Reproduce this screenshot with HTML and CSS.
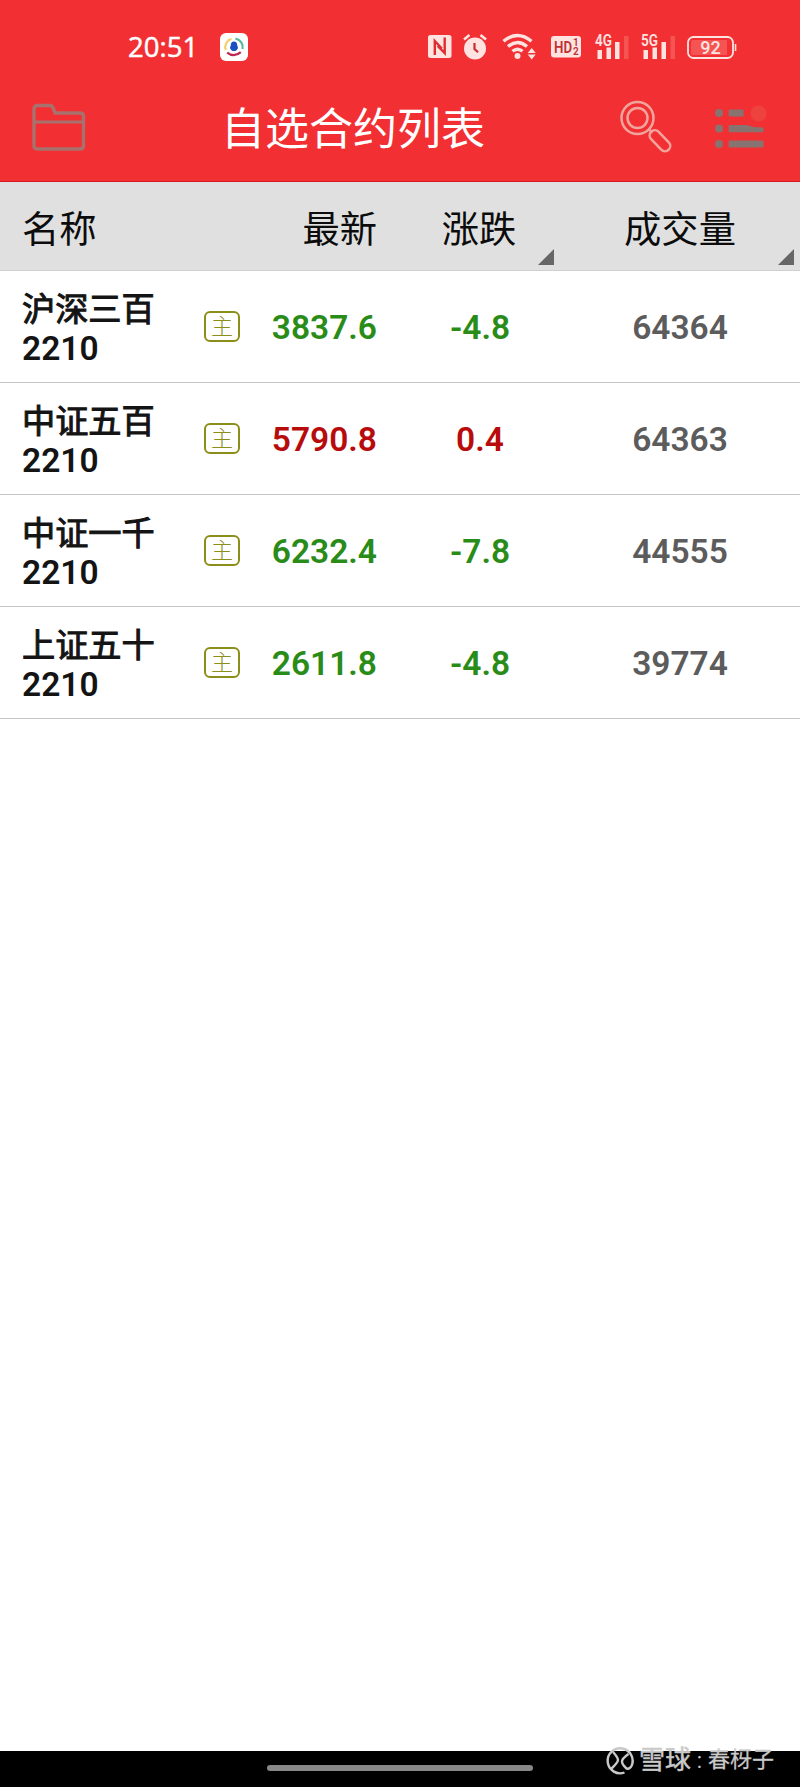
FILE: index.html
```html
<!DOCTYPE html>
<html lang="zh-CN">
<head>
  <meta charset="utf-8">
  <title>自选合约列表</title>
  <link rel="stylesheet" href="styles.css">
</head>
<body>
  <div class="screen">
    <header class="header">
      <div class="status-bar">
        <span class="time">20:51</span>
        <svg class="app-icon" width="28" height="28" viewBox="0 0 28 28">
          <rect width="28" height="28" rx="6" fill="#fff"/>
          <g fill="none" stroke-width="2.2">
            <path d="M5.8 17A8.6 8.6 0 0 1 11.5 5.8" stroke="#f2cf6b"/>
            <path d="M15.5 5.6A8.6 8.6 0 0 1 22.5 16" stroke="#55b99a"/>
            <path d="M7.2 19.6Q14 25 20.8 19.2" stroke="#c0264f"/>
          </g>
          <path d="M14 8.500c2.200 0 3.200 1.600 3.200 4 .9 1.500 1 3 .2 3.600-.5 1.400-1.800 2-3.400 2s-2.900-.6-3.400-2c-.8-.6-.7-2.100.2-3.600 0-2.400 1-4 3.200-4z" fill="#1b4fc4"/>
        </svg>
        <div class="status-icons">
          <svg width="24" height="24" viewBox="0 0 24 24">
            <rect width="23.500" height="23" rx="2.500" fill="#ffe3e0"/>
            <path d="M6.800 20V6l7 7.500M16.700 2.500v15.500l-7-7" fill="none" stroke="#dc2e30" stroke-width="2.400"/>
          </svg>
          <svg class="alarm" width="24" height="26" viewBox="0 0 24 26">
            <circle cx="12" cy="14.500" r="11" fill="#ffe3e0"/>
            <path d="M1 5.500L6.500 1M17.500 1L23 5.500" stroke="#ffe3e0" stroke-width="2.600"/>
            <path d="M11.500 9v6l3.500 3.200" fill="none" stroke="#c92d30" stroke-width="2.200"/>
          </svg>
          <svg class="wifi" width="34" height="26" viewBox="0 0 34 26">
            <g fill="none" stroke="#ffe3e0" stroke-width="3.400">
              <path d="M1.500 7.200Q15.500-4.200 29.500 7.200"/>
              <path d="M6 12.500Q15.500 4.500 25 12.500"/>
              <path d="M10.500 17.300Q15.500 13 20.500 17.300"/>
            </g>
            <circle cx="15.500" cy="22" r="3" fill="#ffe3e0"/>
            <path d="M29.700 14l4 5h-8zM25.700 20.500h8l-4 5z" fill="#ffe3e0"/>
          </svg>
          <svg class="hd" width="30" height="22" viewBox="0 0 30 22">
            <rect width="30" height="21.500" rx="3" fill="#ffe3e0"/>
            <g class="svg-label" fill="#bd3034">
              <text x="3" y="16.500" font-size="16" textLength="18" lengthAdjust="spacingAndGlyphs">HD</text>
              <text x="22" y="10.300" font-size="10">1</text>
              <text x="22" y="19" font-size="10">2</text>
            </g>
          </svg>
          <svg class="signal" width="35" height="26" viewBox="0 0 35 26">
            <text class="svg-label" x="0" y="11.500" font-size="16" fill="#ffe3e0" textLength="17" lengthAdjust="spacingAndGlyphs">4G</text>
            <path d="M2.500 16h4.500v9H2.500zM11.500 13.500H16V25h-4.500zM20 8h4.500v17H20z" fill="#ffe3e0"/>
            <path d="M29 2h4.500v23H29z" fill="#f65353"/>
          </svg>
          <svg class="signal signal-5g" width="35" height="26" viewBox="0 0 35 26">
            <text class="svg-label" x="0" y="11.500" font-size="16" fill="#ffe3e0" textLength="17" lengthAdjust="spacingAndGlyphs">5G</text>
            <path d="M2.500 16h4.500v9H2.500zM11.500 13.500H16V25h-4.500zM20.500 8H25v17h-4.500z" fill="#ffe3e0"/>
            <path d="M29.500 2H34v23h-4.500z" fill="#f65353"/>
          </svg>
          <svg class="battery" width="50" height="23" viewBox="0 0 50 23">
            <rect x="1" y="1" width="45" height="21" rx="5.500" fill="none" stroke="#ffe3e0" stroke-width="1.800"/>
            <path d="M6 4h34v15H6q-2 0-2-2V6q0-2 2-2z" fill="#f65353"/>
            <path d="M48.500 8v7" stroke="#ffe3e0" stroke-width="1.600"/>
            <text class="battery-label" x="23.500" y="17.800" font-size="18" fill="#ffe3e0" text-anchor="middle">92</text>
          </svg>
        </div>
      </div>
      <div class="title-bar">
        <svg class="folder" width="54" height="48" viewBox="0 0 54 48">
          <path d="M2 43V6q0-3.500 3.500-3.500h12.500q2 0 2.800 2l2.400 5.500H48q3.500 0 3.500 3.500V43q0 3-3.500 3H5.500Q2 46 2 43z" fill="none" stroke="#a8716e" stroke-width="3.400"/>
          <path d="M2 19h49.500" stroke="#a8716e" stroke-width="3"/>
        </svg>
        <h1>自选合约列表</h1>
        <svg class="search" width="52" height="53" viewBox="0 0 52 53">
          <g fill="none" stroke="#f0a49c" stroke-width="2.500">
            <circle cx="17.500" cy="18" r="16"/>
            <circle cx="17.500" cy="18" r="10"/>
            <path d="M29 29.500l3.500 3"/>
            <rect x="27.500" y="35.500" width="25" height="10.500" rx="5.250" transform="rotate(46 40 40.700)"/>
          </g>
        </svg>
        <svg class="menu" width="54" height="46" viewBox="0 0 54 46">
          <g fill="#87736f">
            <circle cx="5" cy="9" r="4"/>
            <circle cx="5" cy="24.500" r="4"/>
            <circle cx="5" cy="40" r="4"/>
            <path d="M16 5.500h13.500v7H16q-1.500 0-1.500-1.500V7q0-1.500 1.500-1.500z"/>
            <path d="M16 21h17q5 2.500 16.500 2.500V27q0 1.200-1.500 1.200H16q-1.500 0-1.500-1.500v-4.200Q14.500 21 16 21z"/>
            <rect x="14.500" y="36.500" width="35" height="7" rx="1.500"/>
          </g>
          <circle cx="44.500" cy="9.500" r="8" fill="#ee423e"/>
        </svg>
      </div>
    </header>

    <div class="grid columns">
      <div class="col-name">名称</div>
      <div class="col-price">最新</div>
      <div class="col-change sortable">涨跌</div>
      <div class="col-volume sortable">成交量</div>
    </div>

    <main class="list">
      <div class="grid row">
        <div class="col-name">
          <div class="name"><span class="index">沪深三百</span><br>2210</div>
          <span class="badge">主</span>
        </div>
        <div class="col-price down">3837.6</div>
        <div class="col-change down">-4.8</div>
        <div class="col-volume">64364</div>
      </div>
      <div class="grid row">
        <div class="col-name">
          <div class="name"><span class="index">中证五百</span><br>2210</div>
          <span class="badge">主</span>
        </div>
        <div class="col-price up">5790.8</div>
        <div class="col-change up">0.4</div>
        <div class="col-volume">64363</div>
      </div>
      <div class="grid row">
        <div class="col-name">
          <div class="name"><span class="index">中证一千</span><br>2210</div>
          <span class="badge">主</span>
        </div>
        <div class="col-price down">6232.4</div>
        <div class="col-change down">-7.8</div>
        <div class="col-volume">44555</div>
      </div>
      <div class="grid row">
        <div class="col-name">
          <div class="name"><span class="index">上证五十</span><br>2210</div>
          <span class="badge">主</span>
        </div>
        <div class="col-price down">2611.8</div>
        <div class="col-change down">-4.8</div>
        <div class="col-volume">39774</div>
      </div>
    </main>

    <footer class="nav-bar">
      <div class="home-handle"></div>
      <div class="watermark">
        <svg width="28" height="28" viewBox="0 0 28 28">
          <g fill="none" stroke="#c9c9c9" stroke-width="2.400">
            <path d="M18.500 25.500A12.500 12.500 0 1 1 25.500 19Q23.500 22.500 20.500 21.500Q16 17.500 16 14.500T22.500 7"/>
            <path d="M7 5q5 5.500 5 8T5 22"/>
          </g>
        </svg>
        <span class="brand">雪球</span>
        <span class="colon">:</span>
        <span class="author">春枒子</span>
      </div>
    </footer>
  </div>
</body>
</html>
```

FILE: styles.css
```css
* {
  box-sizing: border-box;
}

body {
  margin: 0;
  background-color: #fff;
  font-family: Roboto, "Noto Sans CJK SC", sans-serif;
}

svg {
  flex-shrink: 0;
  overflow: visible;
}

.screen {
  display: flex;
  flex-direction: column;
  width: 800px;
  height: 1787px;
}

/* Header */
.header {
  height: 182px;
  background-color: #f23033;
  border-bottom: 1px solid #d3191d;
}

.status-bar {
  display: flex;
  align-items: center;
  height: 80px;
  padding: 14px 63px 0 128px;
}

.time {
  width: 92px;
  color: #fff;
  font-family: "Open Sans", sans-serif;
  font-size: 27.500px;
  font-weight: 500;
  line-height: 30px;
  -webkit-text-stroke: 0.5px #fff;
}

.status-icons {
  display: flex;
  align-items: center;
  margin-left: auto;
}

.alarm {
  margin-left: 11px;
}

.wifi {
  margin-left: 15px;
}

.hd {
  margin-left: 15px;
}

.signal {
  margin-left: 14px;
}

.signal-5g {
  margin-left: 11px;
}

.battery {
  margin-left: 11px;
}

.svg-label {
  font-family: Roboto, sans-serif;
  font-weight: 600;
}

.battery-label {
  font-family: Roboto, sans-serif;
  font-weight: 500;
}

.title-bar {
  display: flex;
  align-items: center;
  height: 93px;
  padding: 0 32px 0 32px;
}

h1 {
  margin: 6px 0 0 135px;
  color: #fff;
  font-size: 44px;
  font-weight: 400;
  line-height: 60px;
}

.search {
  margin-left: auto;
}

.menu {
  margin-left: 42px;
}

/* Table */
.grid {
  display: grid;
  grid-template-columns: 240px 160px 160px 240px;
}

.col-name {
  display: flex;
  align-items: center;
  justify-content: space-between;
  padding-left: 22px;
}

.col-price {
  padding-right: 23px;
  text-align: right;
}

.col-change,
.col-volume {
  text-align: center;
}

.columns {
  height: 89px;
  border-bottom: 1px solid #d0d0d0;
  background-color: #e0e0e0;
  color: #0c0c0c;
  font-size: 37.300px;
  line-height: 80px;
}

.columns > div {
  padding-top: 8px;
}

.columns .col-change {
  padding-right: 2px;
}

.sortable {
  position: relative;
}

.sortable::after {
  content: "";
  position: absolute;
  right: 6px;
  bottom: 5px;
  width: 16px;
  height: 16px;
  background-color: #666;
  clip-path: polygon(100% 0, 100% 100%, 0 100%);
}

.row {
  align-items: center;
  height: 112px;
  border-bottom: 1px solid #c6c6c6;
  color: #5c5c5c;
  font-size: 33.500px;
  font-weight: 600;
}

.row > div {
  padding-top: 2px;
}

.name {
  padding-top: 2px;
  color: #141414;
  line-height: 39px;
}

.index {
  font-size: 33.200px;
  font-weight: 400;
  -webkit-text-stroke: 1px #141414;
}

.badge {
  width: 36px;
  height: 31px;
  margin-bottom: 2px;
  border: 2px solid #8c8e1a;
  border-radius: 6px;
  color: #8c8e1a;
  font-size: 22px;
  font-weight: 300;
  line-height: 27px;
  text-align: center;
}

.down {
  color: #2a8c18;
}

.up {
  color: #b80c0c;
}

/* Bottom navigation */
.nav-bar {
  position: relative;
  height: 36px;
  margin-top: auto;
  padding-top: 14px;
  background-color: #000;
}

.home-handle {
  width: 266px;
  height: 6px;
  margin: 0 auto;
  border-radius: 3px;
  background-color: #888;
}

.watermark {
  position: absolute;
  top: -4px;
  left: 606px;
  display: flex;
  align-items: center;
  height: 28px;
  color: #c9c9c9;
  line-height: 24px;
  white-space: nowrap;
}

.brand {
  margin: -3px 0 0 5px;
  font-size: 26px;
  font-weight: 400;
  -webkit-text-stroke: 0.5px #c9c9c9;
}

.colon {
  width: 17px;
  font-size: 22px;
  text-align: center;
}

.author {
  margin-top: -3px;
  font-size: 22px;
  -webkit-text-stroke: 0.3px #c9c9c9;
}
```
